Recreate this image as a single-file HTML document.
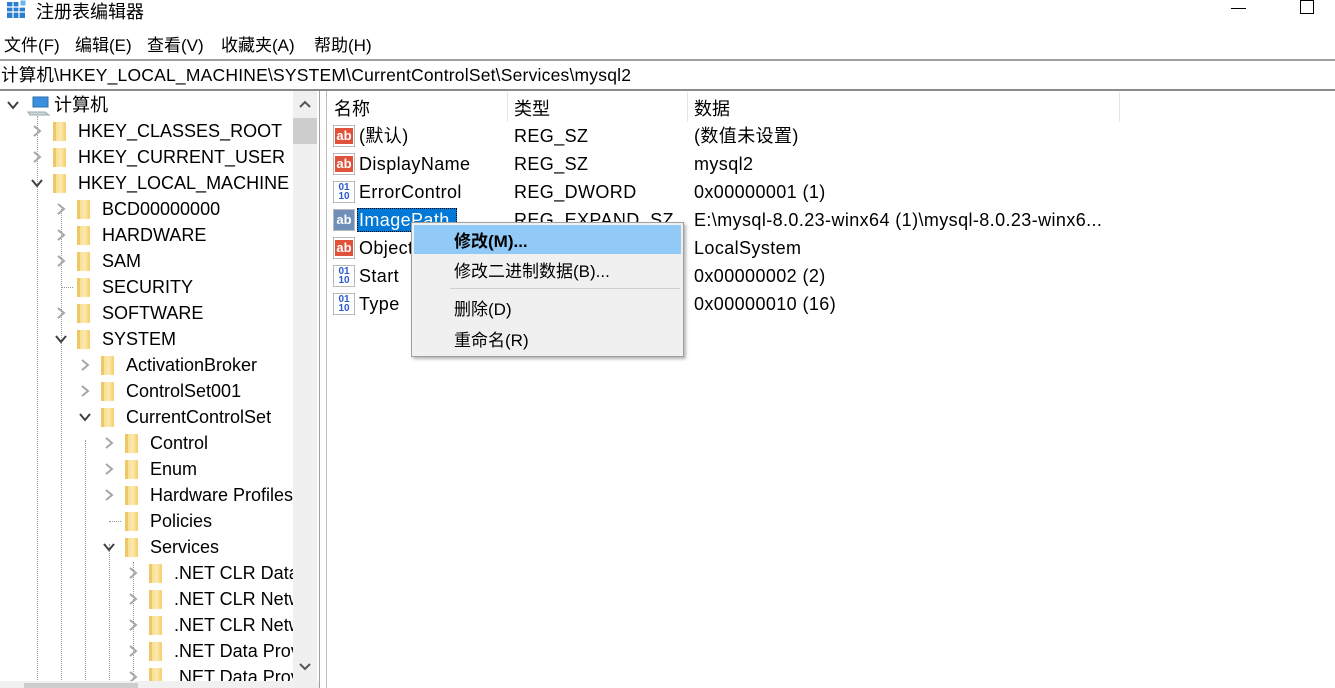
<!DOCTYPE html>
<html><head><meta charset="utf-8"><style>
*{margin:0;padding:0;box-sizing:border-box}
body{width:1335px;height:688px;overflow:hidden;background:#fff;font-family:"Liberation Sans","Noto Sans CJK SC",sans-serif;font-size:18px;color:#000;position:relative}
.a{position:absolute;white-space:nowrap}
.row{position:absolute;height:26px;line-height:26px;left:0}
.fold{position:absolute;width:13px;height:19px;background:linear-gradient(90deg,#f5d98a,#fce9ad 60%,#f3cd6a);border-radius:1px}
.fold:before{content:"";position:absolute;left:0;top:0;width:3px;height:19px;background:#eec766}
.chev{position:absolute;width:12px;height:12px}
.li{position:absolute;height:28px;line-height:28px;letter-spacing:0.4px}
.ic{position:absolute;left:333px;width:22px;height:22px;border:1px solid #bbb;background:#fff;font-size:13px;font-weight:bold;text-align:center;line-height:20px}
</style></head><body>
<svg class="a" style="left:6px;top:0" width="22" height="18"><rect x="1" y="2" width="18" height="16" fill="#2b7fd0"/><g stroke="#fff" stroke-width="1.2"><line x1="1" y1="7" x2="19" y2="7"/><line x1="1" y1="12" x2="19" y2="12"/><line x1="7" y1="2" x2="7" y2="18"/><line x1="13" y1="2" x2="13" y2="18"/></g><rect x="14" y="0" width="6" height="6" fill="#6ab4f0" stroke="#fff"/></svg>
<div class="a" style="left:36px;top:-2px;font-size:18px">注册表编辑器</div>
<div class="a" style="left:1231px;top:8px;width:15px;height:1px;background:#000"></div>
<div class="a" style="left:1300px;top:0;width:14px;height:14px;border:1px solid #000"></div>
<div class="a" style="left:4px;top:31px;font-size:17px">文件(F)</div>
<div class="a" style="left:75px;top:31px;font-size:17px">编辑(E)</div>
<div class="a" style="left:147px;top:31px;font-size:17px">查看(V)</div>
<div class="a" style="left:221px;top:31px;font-size:17px">收藏夹(A)</div>
<div class="a" style="left:314px;top:31px;font-size:17px">帮助(H)</div>
<div class="a" style="left:0;top:59px;width:1335px;height:2px;background:#8a8a8a;opacity:.8"></div>
<div class="a" style="left:0;top:89px;width:1335px;height:2px;background:#8a8a8a"></div>
<div class="a" style="left:1px;top:62px;font-size:17.5px;letter-spacing:0.2px">计算机\HKEY_LOCAL_MACHINE\SYSTEM\CurrentControlSet\Services\mysql2</div>
<div class="a" style="left:0;top:91px;width:293px;height:590px;overflow:hidden" id="tree">
<div class="a" style="left:37px;top:25px;height:570px;border-left:1px dotted #999"></div>
<div class="a" style="left:61px;top:115px;height:480px;border-left:1px dotted #999"></div>
<div class="a" style="left:85px;top:349px;height:240px;border-left:1px dotted #999"></div>
<div class="a" style="left:109px;top:453px;height:140px;border-left:1px dotted #999"></div>
<div class="a" style="left:133px;top:471px;height:120px;border-left:1px dotted #999"></div>
</div>
<div class="a" style="left:293px;top:91px;width:24px;height:590px;background:#f0f0f0"></div>
<svg class="a" style="left:298px;top:98px" width="14" height="12"><polyline points="2,9 7,4 12,9" fill="none" stroke="#555" stroke-width="2"/></svg>
<div class="a" style="left:293px;top:118px;width:24px;height:26px;background:#cdcdcd"></div>
<svg class="a" style="left:298px;top:661px" width="14" height="12"><polyline points="2,3 7,8 12,3" fill="none" stroke="#555" stroke-width="2"/></svg>
<div class="a" style="left:0;top:681px;width:320px;height:7px;background:#f0f0f0"></div>
<div class="a" style="left:24px;top:683px;width:114px;height:5px;background:#cdcdcd"></div>
<div class="a" style="left:319px;top:91px;width:1px;height:597px;background:#a0a0a0"></div>
<div class="a" style="left:326px;top:91px;width:1px;height:597px;background:#bbb"></div>
<div class="a" style="left:334px;top:95px">名称</div>
<div class="a" style="left:514px;top:95px">类型</div>
<div class="a" style="left:694px;top:95px">数据</div>
<div class="a" style="left:507px;top:92px;width:1px;height:30px;background:#e5e5e5"></div>
<div class="a" style="left:687px;top:92px;width:1px;height:30px;background:#e5e5e5"></div>
<div class="a" style="left:1119px;top:92px;width:1px;height:30px;background:#e5e5e5"></div>
<div id="list"></div>
<div class="a" style="left:411px;top:222px;width:273px;height:135px;background:#f0f0f0;border:1px solid #a0a0a0;box-shadow:2px 2px 3px rgba(0,0,0,.3)">
<div class="a" style="left:2px;top:2px;width:267px;height:29px;background:#91c9f7"></div>
<div class="a" style="left:42px;top:4px;font-weight:bold;font-size:17px">修改(M)...</div>
<div class="a" style="left:42px;top:34px;font-size:17px">修改二进制数据(B)...</div>
<div class="a" style="left:38px;top:65px;width:230px;height:1px;background:#d0d0d0"></div>
<div class="a" style="left:42px;top:72px;font-size:17px">删除(D)</div>
<div class="a" style="left:42px;top:103px;font-size:17px">重命名(R)</div>
</div>
<script>
var t=document.getElementById('tree');
var rows=[[0,'e','计算机'],[1,'c','HKEY_CLASSES_ROOT'],[1,'c','HKEY_CURRENT_USER'],[1,'e','HKEY_LOCAL_MACHINE'],[2,'c','BCD00000000'],[2,'c','HARDWARE'],[2,'c','SAM'],[2,'n','SECURITY'],[2,'c','SOFTWARE'],[2,'e','SYSTEM'],[3,'c','ActivationBroker'],[3,'c','ControlSet001'],[3,'e','CurrentControlSet'],[4,'c','Control'],[4,'c','Enum'],[4,'c','Hardware Profiles'],[4,'n','Policies'],[4,'e','Services'],[5,'c','.NET CLR Data'],[5,'c','.NET CLR Networking'],[5,'c','.NET CLR Networking 4.0'],[5,'c','.NET Data Provider for'],[5,'c','.NET Data Provider for']];
var h='';
rows.forEach(function(r,i){var y=1+i*26,l=r[0];var cx=7+24*l;
if(r[1]=='c')h+='<svg class="chev" style="left:'+cx+'px;top:'+(y+7)+'px"><polyline points="3,1 9,6 3,11" fill="none" stroke="#a6a6a6" stroke-width="2"/></svg>';
if(r[1]=='e')h+='<svg class="chev" style="left:'+cx+'px;top:'+(y+7)+'px"><polyline points="1,3 6,9 11,3" fill="none" stroke="#404040" stroke-width="2"/></svg>';
if(r[1]=='n')h+='<div class="a" style="left:'+(cx+6)+'px;top:'+(y+13)+'px;width:12px;border-top:1px dotted #999"></div>';
if(l==0){h+='<svg class="a" style="left:27px;top:'+(y+4)+'px" width="24" height="20"><path d="M6 1 L21 1 L21 11 L6 11 Z" fill="#3a8fde" stroke="#2a6fb0"/><path d="M1 16 L18 16 L22 19 L3 19 Z" fill="#cfd6de" stroke="#9aa"/></svg>';h+='<div class="row" style="top:'+y+'px;left:54px">'+r[2]+'</div>';}
else{h+='<div class="fold" style="left:'+(53+24*(l-1))+'px;top:'+(y+4)+'px"></div>';h+='<div class="row" style="top:'+y+'px;left:'+(78+24*(l-1))+'px">'+r[2]+'</div>';}
});
t.innerHTML+=h;
var L=[['ab','(默认)','REG_SZ','(数值未设置)'],['ab','DisplayName','REG_SZ','mysql2'],['01','ErrorControl','REG_DWORD','0x00000001 (1)'],['ab','ImagePath','REG_EXPAND_SZ','E:\\mysql-8.0.23-winx64 (1)\\mysql-8.0.23-winx6...'],['ab','ObjectName','REG_SZ','LocalSystem'],['01','Start','REG_DWORD','0x00000002 (2)'],['01','Type','REG_DWORD','0x00000010 (16)']];
var g='';
L.forEach(function(r,i){var y=122+i*28;
var sel=i==3;
if(r[0]=='ab')g+='<div class="ic" style="top:'+(y+3)+'px;background:'+(sel?'#6f8fb8':'#fff')+'"><span style="background:'+(sel?'#6f8fb8':'#e0533a')+';display:block;margin:2px 1px;line-height:16px;color:#fff">ab</span></div>';
else g+='<div class="ic" style="top:'+(y+3)+'px;color:#2a5ad0;font-size:10px;line-height:9px;padding-top:1px">01<br>10</div>';
if(sel)g+='<div class="a" style="left:357px;top:'+(y+2)+'px;width:100px;height:24px;background:#0078d7;border:1px dotted #000"></div>';
g+='<div class="li" style="left:359px;top:'+y+'px;color:'+(sel?'#fff':'#000')+'">'+r[1]+'</div>';
g+='<div class="li" style="left:514px;top:'+y+'px">'+r[2]+'</div>';
g+='<div class="li" style="left:694px;top:'+y+'px">'+r[3]+'</div>';
});
document.getElementById('list').innerHTML=g;
</script>
</body></html>
